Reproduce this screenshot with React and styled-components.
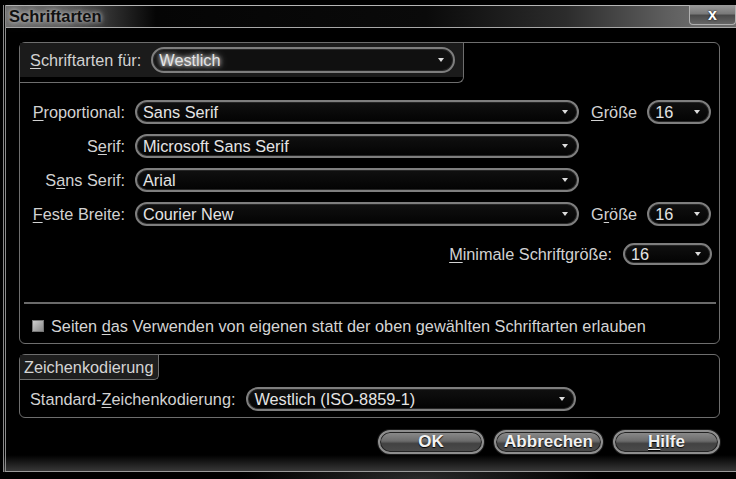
import styled, { createGlobalStyle } from 'styled-components'

const GlobalStyle = createGlobalStyle`
  html, body {
    margin: 0;
    padding: 0;
    background: #000;
    overflow: hidden;
  }
  body {
    font-family: "Liberation Sans", Arial, sans-serif;
    font-size: 16.3px;
    color: #d4d4d4;
    background: radial-gradient(ellipse 180px 30px at 420px 479px, #2a2a2a, #000 100%);
    height: 479px;
  }
`

const Window = styled.div`
  margin: 5px 0 0 3px;
  height: 466px;
  display: flex;
  flex-direction: column;
  border-left: 3px double #8a8a8a;
  border-bottom: 1px solid #9a9a9a;
  background: linear-gradient(to bottom, #000 calc(100% - 16px), #383838 100%);
`

const TitleBar = styled.div`
  height: 21px;
  display: flex;
  align-items: stretch;
  justify-content: space-between;
  border-top: 1px solid #b5b5b5;
  border-bottom: 1px solid #a8a8a8;
  background: linear-gradient(
    to right,
    #6e6e6e 0,
    #5a5a5a 60px,
    #2a2a2a 110px,
    #050505 150px,
    #0a0a0a 420px,
    #2c2c2c 560px,
    #5e5e5e 660px,
    #6a6a6a 690px
  );
`

const Title = styled.div`
  padding-left: 3px;
  font-weight: bold;
  font-size: 16.5px;
  line-height: 21px;
  color: #111;
  text-shadow: 0 0 4px #c8c8c8, 0 0 8px #9a9a9a;
`

const CloseButton = styled.div`
  width: 45px;
  margin-top: -1px;
  margin-bottom: 2px;
  display: flex;
  align-items: center;
  justify-content: center;
  border: 1px solid #b0b0b0;
  border-top: none;
  border-radius: 0 0 4px 4px;
  background: linear-gradient(#9a9a9a, #7a7a7a 45%, #4a4a4a 55%, #666);
  color: #fff;
  font-weight: bold;
  font-size: 16px;
  text-shadow: 0 0 2px #000;
`

const Content = styled.div`
  flex: 1;
  padding: 14px 16px 0 13px;
`

const GroupBox = styled.div`
  border: 1px solid #6e6e6e;
  border-radius: 6px;
  margin-bottom: ${p => p.$gap || 0}px;
`

const GroupHeader = styled.div`
  width: 444px;
  height: 40px;
  display: flex;
  align-items: flex-start;
  gap: 10px;
  padding: 4px 0 0 10px;
  box-sizing: border-box;
  border-right: 1px solid #6e6e6e;
  border-bottom: 1px solid #6e6e6e;
  border-radius: 0 0 6px 0;
  background: linear-gradient(#1b1b1b 0 34px, #000 34px);
`

const TabHeader = styled.div`
  display: inline-block;
  height: 24px;
  line-height: 24px;
  padding: 0 5px 0 4px;
  border-right: 1px solid #6e6e6e;
  border-bottom: 1px solid #6e6e6e;
  border-radius: 0 0 5px 0;
  background: #1e1e1e;
  color: #d4d4d4;
`

const Label = styled.span`
  line-height: ${p => p.$h || 24}px;
  white-space: nowrap;
  text-align: ${p => (p.$right ? 'right' : 'left')};
  color: #d2d2d2;
`

const Key = styled.span`
  text-decoration: underline;
  text-underline-offset: 2px;
`

const Select = styled.div`
  width: ${p => p.$w}px;
  height: ${p => p.$h || 24}px;
  box-sizing: border-box;
  display: flex;
  align-items: center;
  justify-content: space-between;
  padding: 0 9px 0 6px;
  border: 2px solid #7e7e7e;
  border-radius: 13px;
  box-shadow: inset 0 0 0 1px #262626;
  background: ${p => (p.$dark ? '#101010' : 'linear-gradient(#101010, #030303)')};
  color: #e4e4e4;
  white-space: nowrap;

  & > span {
    text-shadow: ${p => (p.$glow ? '0 0 4px #fff, 0 0 8px #aaa' : 'none')};
  }
`

const Arrow = styled.i`
  width: 0;
  height: 0;
  border-left: 3px solid transparent;
  border-right: 3px solid transparent;
  border-top: 4px solid #ddd;
`

const FontGrid = styled.div`
  margin-top: 17px;
  display: grid;
  grid-template-columns: 105px 444px auto 64px;
  justify-content: start;
  grid-auto-rows: 24px;
  column-gap: 10px;
  row-gap: 10px;
  align-items: center;

  & > :nth-child(4n + 3) {
    margin-left: 2px;
  }
`

const MinRow = styled.div`
  margin-top: 16px;
  padding-right: 7px;
  display: flex;
  justify-content: flex-end;
  align-items: center;
  gap: 11px;
`

const Separator = styled.hr`
  margin: 36px 3px 0 4px;
  border: none;
  border-top: 2px solid #6a6a6a;
`

const CheckRow = styled.label`
  height: 20px;
  margin: 12px 0 7px;
  padding-left: 12px;
  display: flex;
  align-items: center;
  gap: 7px;
  color: #d4d4d4;
`

const CheckBox = styled.span`
  width: 12px;
  height: 12px;
  box-sizing: border-box;
  border: 1px solid #777;
  background: linear-gradient(135deg, #d0d0d0, #8a8a8a);
`

const EncodingRow = styled.div`
  margin: 7px 0 6px;
  padding-left: 10px;
  display: flex;
  align-items: center;
  gap: 11px;
`

const ButtonRow = styled.div`
  margin-top: 12px;
  display: flex;
  justify-content: flex-end;
  gap: 10px;
`

const Button = styled.button`
  width: ${p => p.$w}px;
  height: 24px;
  padding: 0;
  border: 2px solid #8e8e8e;
  border-radius: 12px;
  box-shadow: 0 0 0 1px #1a1a1a, inset 0 0 0 1px #222;
  background: linear-gradient(#8c8c8c, #6c6c6c 45%, #424242 58%, #4c4c4c);
  font-family: "Liberation Sans", Arial, sans-serif;
  font-weight: bold;
  font-size: 17px;
  color: #f2f2f2;
  text-shadow: 0 1px 1px #000;
`

const sizeRows = [
  { label: <><Key>P</Key>roportional:</>, value: 'Sans Serif', size: <><Key>G</Key>röße</> },
  { label: <>S<Key>e</Key>rif:</>, value: 'Microsoft Sans Serif' },
  { label: <>S<Key>a</Key>ns Serif:</>, value: 'Arial' },
  { label: <><Key>F</Key>este Breite:</>, value: 'Courier New', size: <>G<Key>r</Key>öße</> },
]

const Dropdown = ({ w, h, value, glow, dark }) => (
  <Select $w={w} $h={h} $glow={glow} $dark={dark}>
    <span>{value}</span>
    <Arrow />
  </Select>
)

export default function App() {
  return (
    <>
      <GlobalStyle />
      <Window>
        <TitleBar>
          <Title>Schriftarten</Title>
          <CloseButton>x</CloseButton>
        </TitleBar>
        <Content>
          <GroupBox $gap={10}>
            <GroupHeader>
              <Label $h={26}><Key>S</Key>chriftarten für:</Label>
              <Dropdown w={304} h={26} value="Westlich" glow dark />
            </GroupHeader>
            <FontGrid>
              {sizeRows.flatMap((row, i) => [
                <Label $right key={'l' + i}>{row.label}</Label>,
                <Dropdown key={'d' + i} w={444} value={row.value} />,
                row.size ? <Label key={'g' + i}>{row.size}</Label> : <span key={'g' + i} />,
                row.size ? <Dropdown key={'s' + i} w={64} value="16" /> : <span key={'s' + i} />,
              ])}
            </FontGrid>
            <MinRow>
              <Label><Key>M</Key>inimale Schriftgröße:</Label>
              <Dropdown w={89} h={22} value="16" />
            </MinRow>
            <Separator />
            <CheckRow>
              <CheckBox />
              <span>Seiten <Key>d</Key>as Verwenden von eigenen statt der oben gewählten Schriftarten erlauben</span>
            </CheckRow>
          </GroupBox>
          <GroupBox>
            <TabHeader>Zeichenkodierung</TabHeader>
            <EncodingRow>
              <Label>Standard-<Key>Z</Key>eichenkodierung:</Label>
              <Dropdown w={330} value="Westlich (ISO-8859-1)" />
            </EncodingRow>
          </GroupBox>
          <ButtonRow>
            <Button $w={106}>OK</Button>
            <Button $w={109}>Abbrechen</Button>
            <Button $w={107}><Key>H</Key>ilfe</Button>
          </ButtonRow>
        </Content>
      </Window>
    </>
  )
}
